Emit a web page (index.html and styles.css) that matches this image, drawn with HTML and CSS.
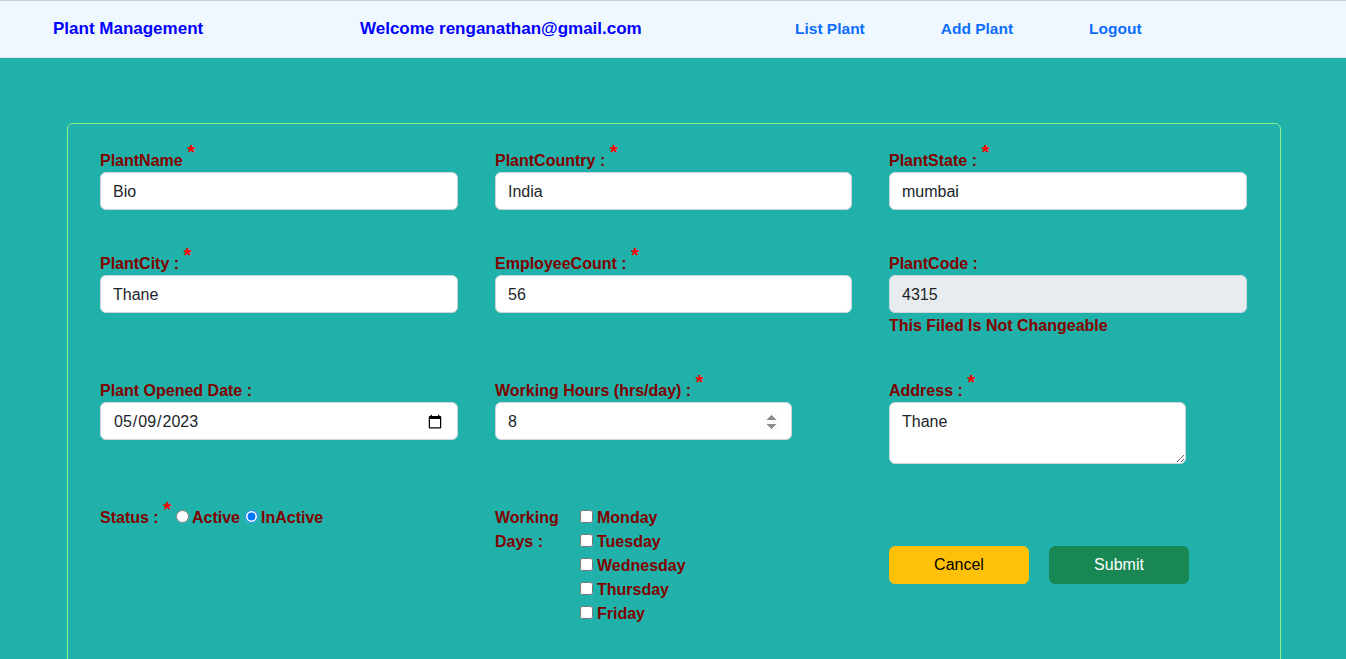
FILE: index.html
```html
<!DOCTYPE html>
<html lang="en">
<head>
<meta charset="utf-8">
<title>Plant Management</title>
<link rel="stylesheet" href="styles.css">
</head>
<body>
<header class="topbar">
  <div class="brand">Plant Management</div>
  <div class="welcome">Welcome renganathan@gmail.com</div>
  <nav class="nav">
    <a href="#">List Plant</a>
    <a href="#">Add Plant</a>
    <a href="#">Logout</a>
  </nav>
</header>
<main class="page">
  <form class="card">
    <div class="grid">
      <div class="field">
        <label class="lbl">PlantName <sup class="req">*</sup></label>
        <input class="ctl" type="text" value="Bio">
      </div>
      <div class="field">
        <label class="lbl">PlantCountry : <sup class="req">*</sup></label>
        <input class="ctl" type="text" value="India">
      </div>
      <div class="field">
        <label class="lbl">PlantState : <sup class="req">*</sup></label>
        <input class="ctl" type="text" value="mumbai">
      </div>

      <div class="field">
        <label class="lbl">PlantCity : <sup class="req">*</sup></label>
        <input class="ctl" type="text" value="Thane">
      </div>
      <div class="field">
        <label class="lbl">EmployeeCount : <sup class="req">*</sup></label>
        <input class="ctl" type="text" value="56">
      </div>
      <div class="field">
        <label class="lbl">PlantCode :</label>
        <input class="ctl locked" type="text" value="4315" readonly>
        <div class="err">This Filed Is Not Changeable</div>
      </div>

      <div class="field">
        <label class="lbl">Plant Opened Date :</label>
        <input class="ctl" type="date" value="2023-05-09">
      </div>
      <div class="field">
        <label class="lbl">Working Hours (hrs/day) : <sup class="req">*</sup></label>
        <input class="ctl short" type="number" value="8">
      </div>
      <div class="field">
        <label class="lbl">Address : <sup class="req">*</sup></label>
        <textarea class="ctl short area">Thane</textarea>
      </div>

      <div class="status">
        Status : <sup class="req">*</sup><input type="radio" name="st">Active<input type="radio" name="st" checked>InActive
      </div>
      <div class="wd">
        <div class="wd-label">Working Days :</div>
        <div class="wd-list">
          <label><input type="checkbox">Monday</label>
          <label><input type="checkbox">Tuesday</label>
          <label><input type="checkbox">Wednesday</label>
          <label><input type="checkbox">Thursday</label>
          <label><input type="checkbox">Friday</label>
        </div>
      </div>
      <div class="actions">
        <button type="button" class="btn cancel">Cancel</button>
        <button type="button" class="btn submit">Submit</button>
      </div>
    </div>
  </form>
</main>
</body>
</html>
```
FILE: styles.css
```css
* { box-sizing: border-box; }
html, body { margin: 0; height: 100%; overflow: hidden; }
body {
  background: #20b2aa;
  font-family: "Liberation Sans", Arial, sans-serif;
  font-size: 16px;
  line-height: 24px;
  color: #212529;
}
.topbar {
  display: flex;
  align-items: center;
  height: 58px;
  background: #f0f8ff;
  border-top: 1px solid #c9cdd0;
  border-bottom: 1px solid #dfe6ea;
  padding-left: 53px;
}
.brand, .welcome {
  color: #0000ff;
  font-weight: 700;
  font-size: 17px;
}
.brand { width: 307px; }
.welcome { width: 435px; }
.nav { display: flex; gap: 76px; }
.nav a {
  color: #0d6efd;
  font-weight: 700;
  font-size: 15.5px;
  text-decoration: none;
}
.page { padding: 65px 65px 0 67px; }
.card {
  border: 1px solid #90ee90;
  border-radius: 6px;
  padding: 24px 33px 40px 32px;
}
.grid {
  display: grid;
  grid-template-columns: 358px 357px 358px;
  column-gap: 37px;
  row-gap: 41px;
  align-items: start;
}
.lbl {
  display: block;
  color: #800000;
  font-weight: 700;
  padding-top: 1px;
  margin-bottom: -1px;
}
.req {
  color: #ff0000;
  font-size: 20px;
  line-height: 0;
  vertical-align: baseline;
  position: relative;
  top: -7px;
  font-weight: 700;
}
.ctl {
  display: block;
  width: 100%;
  height: 38px;
  margin: 0;
  padding: 7px 12px 5px;
  font-family: inherit;
  font-size: 16px;
  line-height: 24px;
  font-weight: 400;
  color: #212529;
  background: #fff;
  border: 1px solid #ced4da;
  border-radius: 6px;
  outline: none;
}
.ctl.short { width: 297px; }
.ctl.area { height: 62px; resize: vertical; }
.ctl.locked { background: #e9ecef; }
input[type=number]::-webkit-inner-spin-button { opacity: 1; }
.err {
  color: #800000;
  font-weight: 700;
  padding-top: 1px;
  margin-bottom: -1px;
}
.status {
  color: #800000;
  font-weight: 700;
  padding-top: 1px;
}
.status input {
  width: 13px;
  height: 13px;
  margin: 3px 3px 0 5px;
}
.wd {
  display: flex;
  color: #800000;
  font-weight: 700;
  padding-top: 1px;
}
.wd-label { width: 81px; flex: none; }
.wd-list label { display: block; }
.wd-list input {
  width: 13px;
  height: 13px;
  margin: 3px 4px 3px 4px;
}
.actions {
  display: flex;
  gap: 20px;
  margin-top: 41px;
}
.btn {
  width: 140px;
  height: 38px;
  border: 1px solid transparent;
  border-radius: 6px;
  font-family: inherit;
  font-size: 16px;
  line-height: 24px;
  padding: 6px 12px;
}
.cancel { background: #ffc107; border-color: #ffc107; color: #000; }
.submit { background: #198754; border-color: #198754; color: #fff; }
```
